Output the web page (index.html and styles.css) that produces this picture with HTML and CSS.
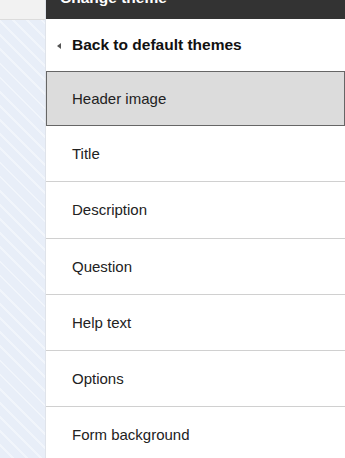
FILE: index.html
```html
<!DOCTYPE html>
<html>
<head>
  <title>Change theme</title>
  <link rel="stylesheet" href="styles.css">
</head>
<body>
  <div class="page">
    <div class="side">
      <div class="side-top"></div>
      <div class="side-stripes"></div>
    </div>

    <div class="panel">
      <div class="panel-header">
        <span class="panel-title">Change theme</span>
      </div>

      <div class="back-row">
        <span class="back-arrow"></span>
        <span class="back-label">Back to default themes</span>
      </div>

      <ul class="theme-list">
        <li class="theme-item selected">Header image</li>
        <li class="theme-item">Title</li>
        <li class="theme-item">Description</li>
        <li class="theme-item">Question</li>
        <li class="theme-item">Help text</li>
        <li class="theme-item">Options</li>
        <li class="theme-item">Form background</li>
      </ul>
    </div>
  </div>
</body>
</html>
```

FILE: styles.css
```css
html, body {
  margin: 0;
  height: 100%;
  overflow: hidden;
}
body {
  font-family: "Liberation Sans", Arial, sans-serif;
  color: #222;
  background-color: #fff;
}
.page {
  display: flex;
  height: 100%;
}
.side {
  width: 45px;
  flex-shrink: 0;
  display: flex;
  flex-direction: column;
}
.side-top {
  height: 19px;
  flex-shrink: 0;
  background-color: #f2f2f2;
  border-bottom: 1px solid #dcdcdc;
}
.side-stripes {
  flex: 1;
  background-color: #e8eef8;
  background-image: repeating-linear-gradient(45deg, #e8eef8 0px, #e8eef8 8px, #f1f5fb 8px, #f1f5fb 10px);
}
.panel {
  flex: 1;
  border-left: 1px solid #dfe3ea;
}
.panel-header {
  height: 19px;
  background-color: #333;
  overflow: hidden;
  padding-left: 14px;
}
.panel-title {
  display: block;
  margin-top: -11px;
  color: #fff;
  font-weight: bold;
  font-size: 15.5px;
  line-height: 18px;
}
.back-row {
  height: 52px;
  display: flex;
  align-items: center;
  padding-left: 11px;
}
.back-arrow {
  width: 0;
  height: 0;
  border-top: 3px solid transparent;
  border-bottom: 3px solid transparent;
  border-right: 4px solid #555;
  margin-right: 11px;
  margin-top: 1px;
}
.back-label {
  font-weight: bold;
  font-size: 15.5px;
  color: #111;
}
.theme-list {
  list-style: none;
  margin: 0;
  padding: 0;
}
.theme-item {
  height: 55.25px;
  line-height: 55px;
  padding-left: 26px;
  font-size: 15px;
  color: #222;
  border-bottom: 1px solid #d0d0d0;
}
.theme-item.selected {
  height: 53px;
  line-height: 53px;
  padding-left: 25px;
  background-color: #dcdcdc;
  border: 1px solid #666;
}
```
